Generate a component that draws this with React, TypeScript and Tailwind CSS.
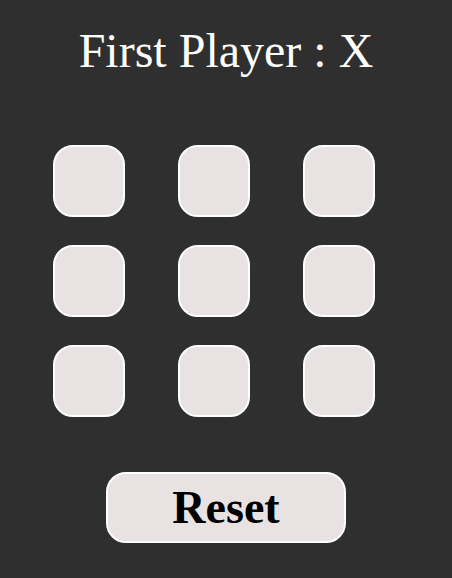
import React, { useState } from 'react';

type Cell = 'X' | 'O' | null;

export default function App() {
  const [cells, setCells] = useState<Cell[]>(Array(9).fill(null));
  const [turn, setTurn] = useState<'X' | 'O'>('X');

  function handleClick(i: number) {
    if (cells[i]) return;
    const next = cells.slice();
    next[i] = turn;
    setCells(next);
    setTurn(turn === 'X' ? 'O' : 'X');
  }

  function reset() {
    setCells(Array(9).fill(null));
    setTurn('X');
  }

  return (
    <div
      className="min-h-[578px] w-full bg-[#2f2f2f] flex flex-col items-center"
      style={{ fontFamily: '"Liberation Serif", "Times New Roman", serif' }}
    >
      <h1 className="mt-[23px] text-[48px] leading-[56px] text-white">First Player : X</h1>
      <div className="mt-[66px] mr-[24px] grid grid-cols-3 gap-x-[53px] gap-y-[28px]">
        {cells.map((c, i) => (
          <button
            key={i}
            onClick={() => handleClick(i)}
            className="w-[72px] h-[72px] rounded-[20px] border-2 border-white bg-[#e8e2e2] text-[40px] text-black"
          >
            {c}
          </button>
        ))}
      </div>
      <button
        onClick={reset}
        className="mt-[55px] w-[240px] h-[71px] rounded-[20px] border-2 border-white bg-[#e8e2e2] text-[46px] leading-[56px] font-bold text-black"
      >
        Reset
      </button>
    </div>
  );
}
